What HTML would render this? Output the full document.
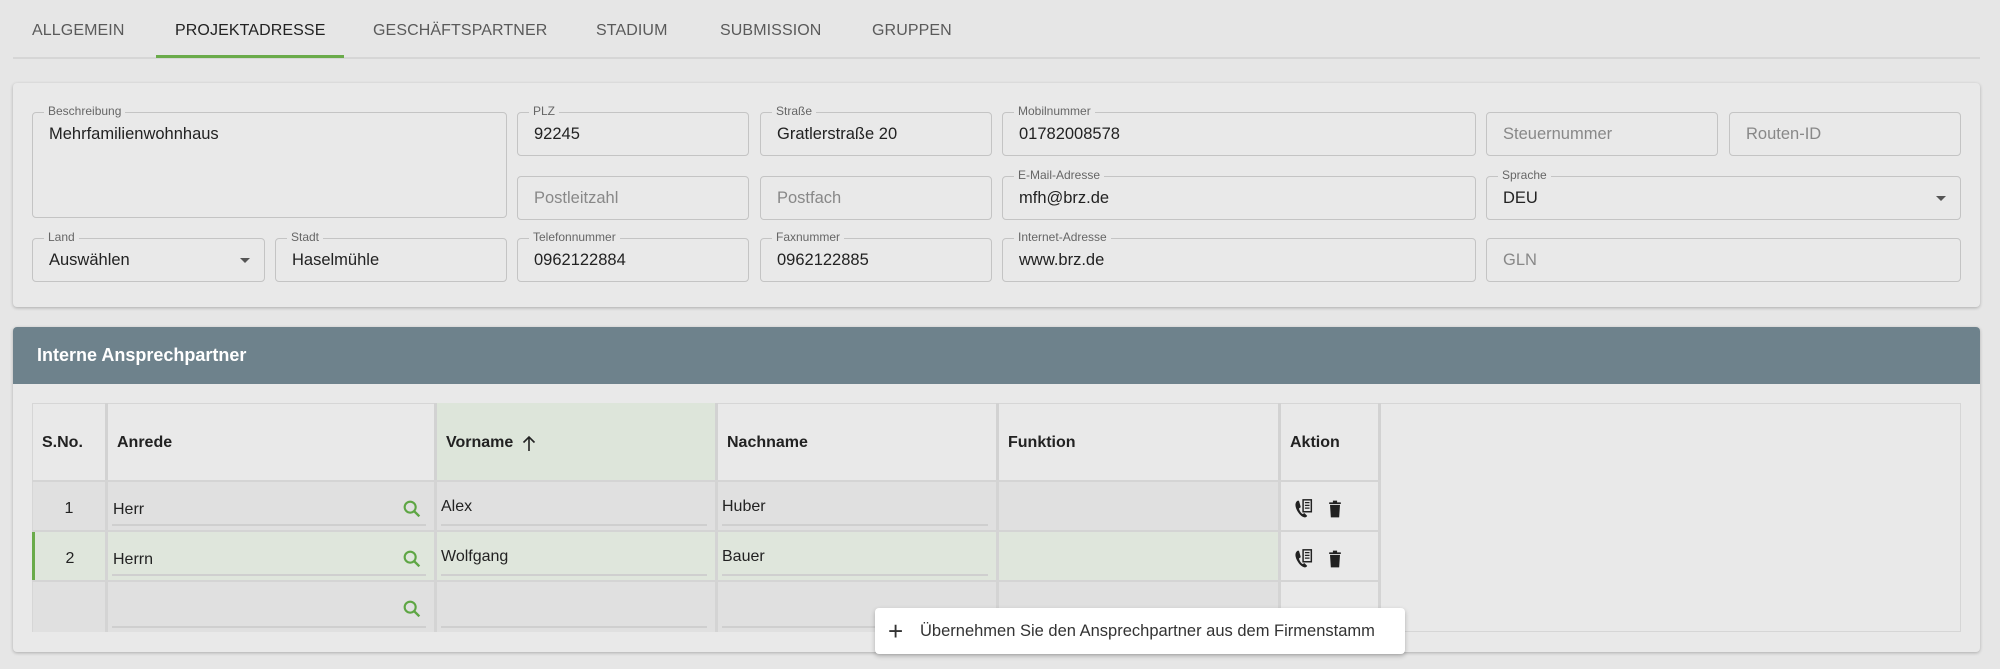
<!DOCTYPE html>
<html><head><meta charset="utf-8">
<style>
*{box-sizing:border-box;margin:0;padding:0}
body{width:2000px;height:669px;background:#e6e6e6;font-family:"Liberation Sans",sans-serif;color:#222;position:relative;overflow:hidden}
.abs{position:absolute}
.tab{position:absolute;top:22px;font-size:16px;color:#5a5a5a;letter-spacing:.1px}
.card{position:absolute;background:#e9e9e9;border-radius:4px;box-shadow:0 1px 3px rgba(0,0,0,.25)}
.f{position:absolute;border:1px solid #c4c4c4;border-radius:4px;height:44px;font-size:16.5px;color:#222;padding:12px 16px}
.f .l{position:absolute;top:-9px;left:11px;font-size:12px;color:#666;background:#e9e9e9;padding:0 4px;line-height:14px}
.f.p{color:#888}
.dd{position:absolute;right:14px;top:19px;width:0;height:0;border-left:5px solid transparent;border-right:5px solid transparent;border-top:5px solid #555}
.th{position:absolute;top:403px;height:79px;font-weight:bold;font-size:16px;padding-top:31px;padding-left:9px;border-right:3px solid #d2d2d2}
.row{position:absolute;left:32px;width:1349px;height:50px;border-top:2px solid #d4d4d4}
.c{position:absolute;top:0;height:48px;border-right:3px solid #d4d4d4;font-size:16px}
.u{position:absolute;left:4px;right:8px;bottom:4px;border-bottom:2px solid #cfcfcf}
</style></head><body>
<div class="tab" style="left:32px">ALLGEMEIN</div>
<div class="tab" style="left:175px;color:#222">PROJEKTADRESSE</div>
<div class="tab" style="left:373px">GESCHÄFTSPARTNER</div>
<div class="tab" style="left:596px">STADIUM</div>
<div class="tab" style="left:720px">SUBMISSION</div>
<div class="tab" style="left:872px">GRUPPEN</div>
<div class="abs" style="left:13px;top:57px;width:1967px;height:2px;background:#d6d6d6"></div>
<div class="abs" style="left:156px;top:55px;width:188px;height:3px;background:#6aab4a"></div>

<div class="card" style="left:13px;top:83px;width:1967px;height:224px"></div>
<div class="f" style="left:32px;top:112px;width:475px;height:106px"><span class="l">Beschreibung</span>Mehrfamilienwohnhaus</div>
<div class="f" style="left:517px;top:112px;width:232px"><span class="l">PLZ</span>92245</div>
<div class="f" style="left:760px;top:112px;width:232px"><span class="l">Straße</span>Gratlerstraße 20</div>
<div class="f" style="left:1002px;top:112px;width:474px"><span class="l">Mobilnummer</span>01782008578</div>
<div class="f p" style="left:1486px;top:112px;width:232px">Steuernummer</div>
<div class="f p" style="left:1729px;top:112px;width:232px">Routen-ID</div>
<div class="f p" style="left:517px;top:176px;width:232px">Postleitzahl</div>
<div class="f p" style="left:760px;top:176px;width:232px">Postfach</div>
<div class="f" style="left:1002px;top:176px;width:474px"><span class="l">E-Mail-Adresse</span>mfh@brz.de</div>
<div class="f" style="left:1486px;top:176px;width:475px"><span class="l">Sprache</span>DEU<span class="dd"></span></div>
<div class="f" style="left:32px;top:238px;width:233px"><span class="l">Land</span>Auswählen<span class="dd"></span></div>
<div class="f" style="left:275px;top:238px;width:232px"><span class="l">Stadt</span>Haselmühle</div>
<div class="f" style="left:517px;top:238px;width:232px"><span class="l">Telefonnummer</span>0962122884</div>
<div class="f" style="left:760px;top:238px;width:232px"><span class="l">Faxnummer</span>0962122885</div>
<div class="f" style="left:1002px;top:238px;width:474px"><span class="l">Internet-Adresse</span>www.brz.de</div>
<div class="f p" style="left:1486px;top:238px;width:475px">GLN</div>

<div class="card" style="left:13px;top:327px;width:1967px;height:325px"></div>
<div class="abs" style="left:13px;top:327px;width:1967px;height:57px;background:#6e828c;border-radius:4px 4px 0 0;color:#fff;font-size:18px;font-weight:bold;padding:18px 24px">Interne Ansprechpartner</div>
<div class="abs" style="left:32px;top:403px;width:1929px;height:229px;border:1px solid #d6d6d6"></div>
<div class="th" style="left:32px;width:76px;border-left:1px solid #d6d6d6">S.No.</div>
<div class="th" style="left:108px;width:329px;padding-left:9px">Anrede</div>
<div class="th" style="left:437px;width:281px;background:#dde5da">Vorname<svg class="abs" style="left:84px;top:31px" width="16" height="18" viewBox="0 0 16 18"><path d="M8 17V3M2.5 8.5L8 3l5.5 5.5" fill="none" stroke="#222" stroke-width="1.6"/></svg></div>
<div class="th" style="left:718px;width:281px">Nachname</div>
<div class="th" style="left:999px;width:282px">Funktion</div>
<div class="th" style="left:1281px;width:100px">Aktion</div>

<svg width="0" height="0" style="position:absolute"><defs>
<symbol id="s" viewBox="0 0 24 24"><circle cx="10" cy="10" r="6" fill="none" stroke="#5ea644" stroke-width="2.3"/><path d="M14.5 14.5L20 20" stroke="#5ea644" stroke-width="2.6"/></symbol>
<symbol id="ph" viewBox="0 0 24 24"><path d="M5 3c-1.5 1-3 3-2 7 1 4 5 10 9 11 2 .5 3-.5 3.5-1.5l-3-3-2 1c-2-1-3.5-4-4-6l2-1.5L6.5 3z" fill="#222"/><rect x="11" y="2" width="9" height="13" fill="none" stroke="#222" stroke-width="1.6"/><path d="M13 5h5M13 8h5M13 11h5" stroke="#222" stroke-width="1.4"/></symbol>
<symbol id="tr" viewBox="0 0 24 24"><path d="M6 7h12l-1 15H7zM5 4h14v2H5zM9.5 2h5v2h-5z" fill="#222"/></symbol>
</defs></svg>

<div class="row" style="top:480px;background:#e0e0e0">
 <div class="c" style="left:0;width:76px;text-align:center;padding-top:18px;border-left:1px solid #d6d6d6">1</div>
 <div class="c" style="left:76px;width:329px;padding:19px 5px"><span>Herr</span><svg class="abs" style="left:293px;top:16px" width="22" height="22"><use href="#s"/></svg><div class="u"></div></div>
 <div class="c" style="left:405px;width:281px;padding:16px 4px">Alex<div class="u"></div></div>
 <div class="c" style="left:686px;width:281px;padding:16px 4px">Huber<div class="u"></div></div>
 <div class="c" style="left:967px;width:282px"></div>
 <div class="c" style="left:1249px;width:100px;background:#e9e9e9"><svg class="abs" style="left:12px;top:16px" width="22" height="22"><use href="#ph"/></svg><svg class="abs" style="left:44px;top:16px" width="20" height="22"><use href="#tr"/></svg></div>
</div>
<div class="row" style="top:530px;background:#dfe6dc">
 <div class="c" style="left:0;width:76px;text-align:center;padding-top:18px;border-left:3px solid #6aab4a">2</div>
 <div class="c" style="left:76px;width:329px;padding:19px 5px"><span>Herrn</span><svg class="abs" style="left:293px;top:16px" width="22" height="22"><use href="#s"/></svg><div class="u"></div></div>
 <div class="c" style="left:405px;width:281px;padding:16px 4px">Wolfgang<div class="u"></div></div>
 <div class="c" style="left:686px;width:281px;padding:16px 4px">Bauer<div class="u"></div></div>
 <div class="c" style="left:967px;width:282px"></div>
 <div class="c" style="left:1249px;width:100px;background:#e9e9e9"><svg class="abs" style="left:12px;top:16px" width="22" height="22"><use href="#ph"/></svg><svg class="abs" style="left:44px;top:16px" width="20" height="22"><use href="#tr"/></svg></div>
</div>
<div class="row" style="top:580px;background:#e0e0e0;height:52px">
 <div class="c" style="left:0;width:76px;border-left:1px solid #d6d6d6;height:50px"></div>
 <div class="c" style="left:76px;width:329px;height:50px"><svg class="abs" style="left:293px;top:16px" width="22" height="22"><use href="#s"/></svg><div class="u"></div></div>
 <div class="c" style="left:405px;width:281px;height:50px"><div class="u"></div></div>
 <div class="c" style="left:686px;width:281px;height:50px"><div class="u"></div></div>
 <div class="c" style="left:967px;width:282px;height:50px"></div>
 <div class="c" style="left:1249px;width:100px;height:50px;background:#e9e9e9"></div>
</div>

<div class="abs" style="left:875px;top:608px;width:530px;height:46px;background:#fff;border-radius:4px;box-shadow:0 2px 5px rgba(0,0,0,.25);font-size:16.5px;padding:14px 0 0 45px;color:#333">Übernehmen Sie den Ansprechpartner aus dem Firmenstamm
 <span class="abs" style="left:13px;top:10px;font-size:26px;line-height:26px">+</span></div>
</body></html>
